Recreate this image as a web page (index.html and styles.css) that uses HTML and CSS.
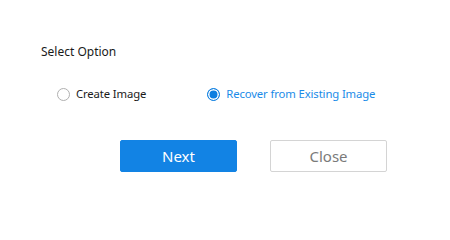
FILE: index.html
```html
<!DOCTYPE html>
<html>
<head>
<meta charset="utf-8">
<link rel="stylesheet" href="styles.css">
</head>
<body>
<div class="dialog">
  <div class="title">Select Option</div>
  <div class="options">
    <label class="option">
      <span class="radio"></span>
      <span class="label">Create Image</span>
    </label>
    <label class="option selected">
      <span class="radio"></span>
      <span class="label">Recover from Existing Image</span>
    </label>
  </div>
  <div class="actions">
    <button class="btn primary">Next</button>
    <button class="btn secondary">Close</button>
  </div>
</div>
</body>
</html>
```
FILE: styles.css
```css
html, body {
  margin: 0;
  padding: 0;
  background: #ffffff;
}
.dialog {
  width: 450px;
  height: 214px;
  box-sizing: border-box;
  padding: 44px 0 0 41px;
  font-family: "Noto Sans", "Open Sans", sans-serif;
  color: #1a1a1a;
}
.title {
  font-size: 12px;
  line-height: 16px;
  height: 16px;
}
.options {
  display: flex;
  margin-top: 26px;
  padding-left: 16px;
}
.option {
  display: flex;
  align-items: center;
  gap: 6px;
  font-size: 11.3px;
  letter-spacing: -0.12px;
  line-height: 16px;
}
.option + .option {
  margin-left: 61px;
}
.radio {
  width: 13px;
  height: 13px;
  box-sizing: border-box;
  border: 1px solid #b0b0b0;
  border-radius: 50%;
  background: #fff;
}
.selected .radio {
  border: 1.5px solid #0e7fe0;
  background: #0e7fe0;
  box-shadow: inset 0 0 0 1.5px #ffffff;
}
.selected .label {
  color: #1a8be8;
}
.actions {
  display: flex;
  margin-top: 38px;
  padding-left: 79px;
  gap: 33px;
}
.btn {
  width: 117px;
  height: 32px;
  box-sizing: border-box;
  border-radius: 2px;
  font-family: "Noto Sans", "Open Sans", sans-serif;
  font-size: 15px;
  padding: 0;
  cursor: pointer;
}
.primary {
  background: #1283e4;
  border: 1px solid #1283e4;
  color: #ffffff;
}
.secondary {
  background: #ffffff;
  border: 1px solid #d4d4d4;
  color: #7a7a7a;
}
```
